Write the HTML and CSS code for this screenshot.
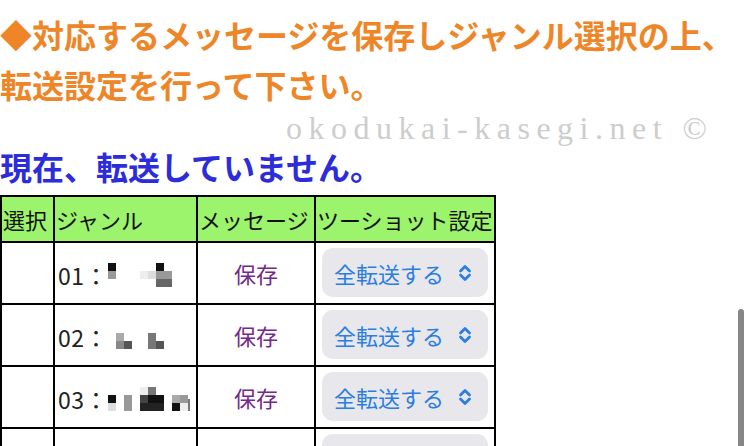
FILE: index.html
```html
<!DOCTYPE html>
<html lang="ja">
<head>
<meta charset="utf-8">
<title>転送設定</title>
<link rel="stylesheet" href="styles.css">
</head>
<body>
<div class="page">
  <h2 class="notice">◆対応するメッセージを保存しジャンル選択の上、転送設定を行って下さい。</h2>
  <div class="watermark">okodukai-kasegi.net ©</div>
  <h3 class="status">現在、転送していません。</h3>
  <table class="genre-table">
    <colgroup>
      <col class="c-sel"><col class="c-genre"><col class="c-msg"><col class="c-set">
    </colgroup>
    <thead>
      <tr>
        <th>選択</th>
        <th>ジャンル</th>
        <th>メッセージ</th>
        <th>ツーショット設定</th>
      </tr>
    </thead>
    <tbody>
      <tr>
        <td></td>
        <td class="genre"><span class="num">01：</span><svg class="mosaic" width="72" height="24" viewBox="0 0 72 24"><rect x="0" y="0" width="8" height="8" fill="#111"/><rect x="0" y="8" width="8" height="8" fill="#999"/><rect x="32" y="8" width="8" height="8" fill="#eee"/><rect x="40" y="8" width="8" height="8" fill="#ddd"/><rect x="48" y="0" width="8" height="8" fill="#111"/><rect x="48" y="8" width="16" height="8" fill="#999"/><rect x="48" y="16" width="16" height="8" fill="#666"/></svg></td>
        <td class="msg">保存</td>
        <td class="set"><div class="select"><span>全転送する</span><svg class="chev" width="16" height="20" viewBox="0 0 16 20"><polyline points="3.5,8 8,3.5 12.5,8"/><polyline points="3.5,12 8,16.5 12.5,12"/></svg></div></td>
      </tr>
      <tr>
        <td></td>
        <td class="genre"><span class="num">02：</span><svg class="mosaic" width="72" height="24" viewBox="0 0 72 24"><rect x="8" y="8" width="8" height="8" fill="#aaa"/><rect x="8" y="16" width="8" height="8" fill="#888"/><rect x="16" y="16" width="8" height="8" fill="#555"/><rect x="40" y="8" width="8" height="16" fill="#777"/><rect x="48" y="16" width="8" height="8" fill="#555"/></svg></td>
        <td class="msg">保存</td>
        <td class="set"><div class="select"><span>全転送する</span><svg class="chev" width="16" height="20" viewBox="0 0 16 20"><polyline points="3.5,8 8,3.5 12.5,8"/><polyline points="3.5,12 8,16.5 12.5,12"/></svg></div></td>
      </tr>
      <tr>
        <td></td>
        <td class="genre"><span class="num">03：</span><svg class="mosaic" width="84" height="24" viewBox="0 0 84 24"><rect x="0" y="8" width="8" height="8" fill="#111"/><rect x="0" y="16" width="8" height="8" fill="#ddd"/><rect x="16" y="8" width="8" height="16" fill="#999"/><rect x="32" y="0" width="8" height="8" fill="#eee"/><rect x="40" y="0" width="8" height="8" fill="#777"/><rect x="32" y="8" width="8" height="8" fill="#444"/><rect x="40" y="8" width="16" height="8" fill="#111"/><rect x="32" y="16" width="24" height="8" fill="#222"/><rect x="64" y="8" width="8" height="8" fill="#aaa"/><rect x="72" y="8" width="8" height="8" fill="#999"/><rect x="64" y="16" width="8" height="8" fill="#111"/><rect x="72" y="16" width="8" height="8" fill="#eee"/><rect x="80" y="12" width="2" height="12" fill="#777"/></svg></td>
        <td class="msg">保存</td>
        <td class="set"><div class="select"><span>全転送する</span><svg class="chev" width="16" height="20" viewBox="0 0 16 20"><polyline points="3.5,8 8,3.5 12.5,8"/><polyline points="3.5,12 8,16.5 12.5,12"/></svg></div></td>
      </tr>
      <tr>
        <td></td>
        <td class="genre"></td>
        <td class="msg"></td>
        <td class="set"><div class="select"></div></td>
      </tr>
    </tbody>
  </table>
</div>
<div class="scroll-thumb"></div>
</body>
</html>
```
FILE: styles.css
```css
html, body {
  margin: 0;
  padding: 0;
  overflow: hidden;
  background: #fff;
}
body {
  font-family: "Noto Sans CJK JP", "Noto Sans", sans-serif;
  color: #111;
  position: relative;
  height: 446px;
}
.page {
  position: relative;
  padding-top: 9px;
}
.notice {
  margin: 0;
  font-size: 32px;
  line-height: 50px;
  font-weight: 700;
  color: #ee8628;
  width: 750px;
}
.watermark {
  position: absolute;
  left: 286px;
  top: 110px;
  font-family: "Liberation Serif", "DejaVu Serif", serif;
  font-size: 32px;
  line-height: 36px;
  letter-spacing: 6.5px;
  color: #cdcdcd;
  white-space: nowrap;
}
.status {
  margin: 35px 0 7px;
  font-size: 32px;
  line-height: 44px;
  font-weight: 700;
  color: #2c2cdb;
}
.genre-table {
  border-collapse: collapse;
  table-layout: fixed;
  width: 496px;
  border: 2px solid #000;
  font-size: 22px;
}
.c-sel { width: 53px; }
.c-genre { width: 143px; }
.c-msg { width: 118px; }
.c-set { width: 180px; }
.genre-table th,
.genre-table td {
  border: 2px solid #000;
  white-space: nowrap;
  overflow: hidden;
}
.genre-table th {
  background: #9cf36c;
  font-weight: 400;
  text-align: left;
  height: 44px;
  padding: 0 1px;
  line-height: 44px;
  color: #111;
}
.genre-table td {
  padding: 0 2px;
  vertical-align: middle;
}
.genre {
  color: #222;
}
.genre .num {
  display: inline-block;
  vertical-align: middle;
  margin-left: 1px;
  font-size: 23px;
  letter-spacing: 0.5px;
}
.mosaic {
  display: inline-block;
  vertical-align: middle;
  margin-left: 0;
}
.msg {
  text-align: center;
  color: #74288a;
}
.genre-table td.set {
  padding: 5px 6px 6px;
  vertical-align: top;
}
.select {
  display: flex;
  align-items: center;
  gap: 13px;
  height: 49px;
  padding-left: 12px;
  border-radius: 11px;
  background: #e8e8ec;
  color: #2b7de0;
}
.chev {
  display: block;
  flex-shrink: 0;
}
.chev polyline {
  fill: none;
  stroke: #2b7de0;
  stroke-width: 2.8;
  stroke-linecap: round;
  stroke-linejoin: round;
}
.scroll-thumb {
  position: absolute;
  left: 738px;
  top: 309px;
  width: 6px;
  height: 160px;
  border-radius: 3px;
  background: #878787;
}
```
